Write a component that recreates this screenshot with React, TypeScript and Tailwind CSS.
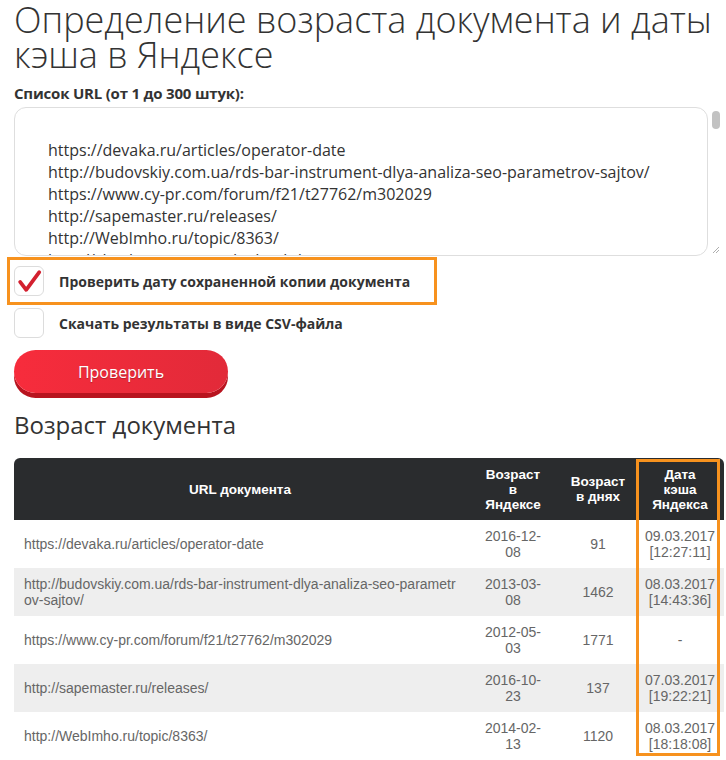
import React from 'react';

type Row = {
  url: string;
  age: [string, string];
  days: string;
  cache: [string, string] | null;
};

const urls = [
  '',
  'https://devaka.ru/articles/operator-date',
  'http://budovskiy.com.ua/rds-bar-instrument-dlya-analiza-seo-parametrov-sajtov/',
  'https://www.cy-pr.com/forum/f21/t27762/m302029',
  'http://sapemaster.ru/releases/',
  'http://WebImho.ru/topic/8363/',
  'http://checkparams.com/ru/tools/',
];

const rows: Row[] = [
  { url: 'https://devaka.ru/articles/operator-date', age: ['2016-12-', '08'], days: '91', cache: ['09.03.2017', '[12:27:11]'] },
  { url: 'http://budovskiy.com.ua/rds-bar-instrument-dlya-analiza-seo-parametrov-sajtov/', age: ['2013-03-', '08'], days: '1462', cache: ['08.03.2017', '[14:43:36]'] },
  { url: 'https://www.cy-pr.com/forum/f21/t27762/m302029', age: ['2012-05-', '03'], days: '1771', cache: null },
  { url: 'http://sapemaster.ru/releases/', age: ['2016-10-', '23'], days: '137', cache: ['07.03.2017', '[19:22:21]'] },
  { url: 'http://WebImho.ru/topic/8363/', age: ['2014-02-', '13'], days: '1120', cache: ['08.03.2017', '[18:18:08]'] },
];

function Checkbox({ checked }: { checked?: boolean }) {
  return (
    <span className="flex h-[30px] w-[30px] shrink-0 items-center justify-center rounded-[6px] border border-[#dcdcdc] bg-white">
      {checked && (
        <svg width="30" height="30" viewBox="0 0 30 30">
          <path
            d="M5.5 16 L12 24.5 L26 5.5"
            fill="none"
            stroke="#d3202f"
            strokeWidth="4"
            strokeLinecap="round"
            strokeLinejoin="round"
          />
        </svg>
      )}
    </span>
  );
}

export default function App() {
  return (
    <div className="min-h-[760px] bg-white pl-[14px] pr-[2px] text-[#333] [font-family:'Open_Sans',sans-serif]">
      <h1 className="pt-[2px] text-[36px] font-light leading-[35px] text-[#333]">
        Определение возраста документа и даты кэша в Яндексе
      </h1>

      <p className="mt-[11px] text-[15px] font-bold leading-[20px] tracking-[-0.2px]">Список URL (от 1 до 300 штук):</p>

      <div className="mt-[4px] flex h-[149px]">
        <div className="flex-1 overflow-hidden rounded-[12px] border border-[#dedede] pl-[33px] pt-[9px] text-[16px] leading-[22px] text-[#333]">
          {urls.map((u, i) => (
            <div key={i} className="h-[22px] whitespace-nowrap">
              {u}
            </div>
          ))}
        </div>
        <div className="flex w-[16px] flex-col items-center justify-between pb-[2px] pt-[4px]">
          <span className="h-[18px] w-[8px] rounded-full bg-[#c2c2c2]" />
          <svg width="8" height="8" viewBox="0 0 8 8">
            <path d="M1 7 L7 1 M4 7 L7 4" stroke="#999" strokeWidth="0.8" />
          </svg>
        </div>
      </div>

      <label className="-ml-[7px] mt-[1px] flex h-[48px] w-[430px] items-center gap-[15px] border-[3px] border-[#f7921e] pl-[4px]">
        <Checkbox checked />
        <span className="text-[14px] font-bold">Проверить дату сохраненной копии документа</span>
      </label>

      <label className="mt-[3px] flex items-center gap-[15px]">
        <Checkbox />
        <span className="text-[14px] font-bold">Скачать результаты в виде CSV-файла</span>
      </label>

      <button className="mt-[12px] h-[43px] w-[214px] rounded-full bg-gradient-to-r from-[#f72c3c] to-[#e22a39] text-[16px] text-white shadow-[0_5px_0_#b8141f] [text-shadow:0_1px_1px_rgba(0,0,0,0.25)]">
        Проверить
      </button>

      <h2 className="mt-[16px] text-[24px] leading-[32px] text-[#333]">Возраст документа</h2>

      <div className="relative mt-[17px] overflow-hidden rounded-t-[6px] [font-family:'Liberation_Sans',Arial,sans-serif]">
        <table className="w-full table-fixed border-collapse">
          <colgroup>
            <col className="w-[452px]" />
            <col className="w-[94px]" />
            <col className="w-[76px]" />
            <col className="w-[88px]" />
          </colgroup>
          <thead>
            <tr className="bg-[#2a2c2e] text-[13.5px] font-bold leading-[15px] text-white">
              <th className="h-[62px] px-[10px] text-center">URL документа</th>
              <th className="px-[2px] text-center">
                Возраст
                <br />в<br />
                Яндексе
              </th>
              <th className="px-[2px] text-center">
                Возраст
                <br />в днях
              </th>
              <th className="px-[2px] text-center">
                Дата
                <br />
                кэша
                <br />
                Яндекса
              </th>
            </tr>
          </thead>
          <tbody>
            {rows.map((r, i) => (
              <tr
                key={r.url}
                className={`text-[14px] leading-[16px] text-[#666] ${i % 2 === 1 ? 'bg-[#eeeeee]' : 'bg-white'}`}
              >
                <td className="h-[48px] break-all px-[10px] align-middle">{r.url}</td>
                <td className="text-center align-middle">
                  {r.age[0]}
                  <br />
                  {r.age[1]}
                </td>
                <td className="text-center align-middle">{r.days}</td>
                <td className="text-center align-middle">
                  {r.cache ? (
                    <>
                      {r.cache[0]}
                      <br />
                      {r.cache[1]}
                    </>
                  ) : (
                    '-'
                  )}
                </td>
              </tr>
            ))}
          </tbody>
        </table>
        <div className="pointer-events-none absolute left-[622px] top-[1px] h-[297px] w-[84px] border-[3px] border-[#f7921e]" />
      </div>
    </div>
  );
}
